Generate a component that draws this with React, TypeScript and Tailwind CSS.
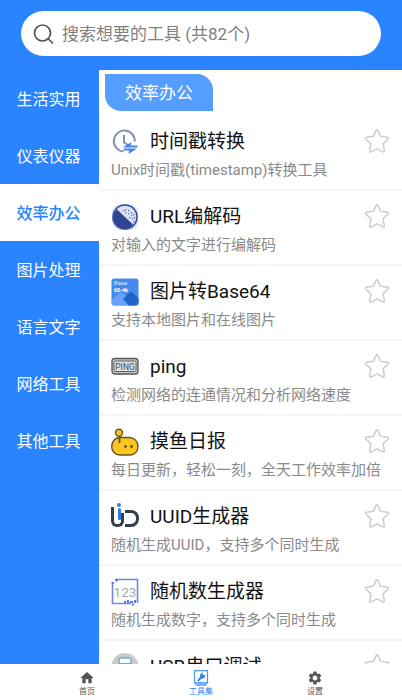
import React, { useState } from 'react';
import { clsx } from 'clsx';
import { MdHome, MdSettings } from 'react-icons/md';

interface Tool {
  icon: React.ReactNode;
  name: string;
  desc?: string;
}

function TimestampIcon() {
  return (
    <svg viewBox="0 0 28 28" className="size-7" fill="none">
      <path d="M12.500 23.500a10.500 10.500 0 1 1 11.300-10" stroke="#8393b4" strokeWidth="2" />
      <path d="M13 7v7.500l4 2.500" stroke="#8393b4" strokeWidth="2" />
      <path d="M11.500 19.500l9-5.500-1 3.500h7.500l-1 2zM26 20.500l-8.500 5.500.700-3.500h-6l1-2z" fill="#4380f5" />
    </svg>
  );
}

function UrlIcon() {
  const dots = [
    [14, 6], [17, 7], [20, 9], [14, 9], [17, 10], [20, 12], [22, 11],
    [18, 14], [21, 15], [23, 14], [22, 18], [12, 7],
  ];
  return (
    <svg viewBox="0 0 28 28" className="size-7" fill="none">
      <rect x="1" y="1" width="26" height="26" rx="9" fill="#d5dbff" />
      <circle cx="14" cy="14" r="12" fill="#dce2f6" stroke="#344894" strokeWidth="1.500" />
      <path d="M6 6.500L22 21.500A11 11 0 1 1 6 6.500z" fill="#304591" />
      {dots.map(([x, y]) => (
        <rect key={`${x}-${y}`} x={x} y={y} width="1.300" height="1.300" fill="#6574a8" />
      ))}
    </svg>
  );
}

function Base64Icon() {
  return (
    <svg viewBox="0 0 28 28" className="size-7" fill="none">
      <rect x="0.500" y="0.500" width="27" height="27" rx="3" fill="#458af0" />
      <path d="M1 22l7-7q2-2 4 0l12 12.500H3.500q-3 0-3-3z" fill="#6aa2fb" />
      <path d="M12 21l6-6q2-2 4 0l5.500 5.500v4q0 3-3 3h-6.500z" fill="#1e63c9" />
      <text x="3" y="7" fontSize="6" fill="#dcecff" fontFamily="Roboto, sans-serif">Base</text>
      <text x="3" y="13.500" fontSize="5" fontWeight="900" fill="#fff" fontFamily="Roboto, sans-serif">65-4k</text>
    </svg>
  );
}

function PingIcon() {
  return (
    <svg viewBox="0 0 28 28" className="size-7" fill="none">
      <path d="M3.500 5.500H24q3 0 3 3V18q0 3-3 3H4q-3 0-3-3V8.500q0-3 2.500-3z" fill="#c8c8c8" stroke="#555" strokeWidth="1.300" />
      <rect x="3" y="8" width="22" height="10.500" rx="1.500" fill="#e4e4e4" stroke="#5d5d5d" />
      <text x="14" y="16.500" fontSize="8.500" textAnchor="middle" fill="#444" fontFamily="Roboto, sans-serif">PING</text>
    </svg>
  );
}

function FishIcon() {
  return (
    <svg viewBox="0 0 28 28" className="size-7" stroke="#625426" strokeWidth="1.400">
      <path d="M9 9.500h9c5.500 0 9 4 9 9s-3.500 8.500-8 8.500H9c-5 0-8.300-4-8.300-8.500S4 9.500 9 9.500z" fill="#fec522" />
      <path d="M8.500 8v7" fill="none" strokeWidth="1.800" />
      <circle cx="8" cy="4.800" r="3.500" fill="#fec522" />
      <circle cx="14.500" cy="18.500" r="1.300" fill="#4b3d13" stroke="none" />
      <circle cx="20.500" cy="18.500" r="1.300" fill="#4b3d13" stroke="none" />
    </svg>
  );
}

function UuidIcon() {
  return (
    <div className="relative flex size-7 items-end pb-1">
      <div className="h-5 w-1.5 rounded-bl-md border-b-3 border-l-3 border-[#333d4f]" />
      <div className="h-3.5 w-[7px] rounded-br-md border-r-3 border-b-3 border-[#333d4f]" />
      <div className="ml-px h-[17px] flex-1 rounded-r-lg border-3 border-l-0 border-[#333d4f]" />
      <div className="absolute top-0 left-1.5 flex flex-col items-center gap-px">
        <div className="size-1 rounded-full bg-[#2e78ee]" />
        <div className="h-3 w-[3px] rounded-sm bg-[#2e78ee]" />
      </div>
    </div>
  );
}

function RandomIcon() {
  return (
    <svg viewBox="0 0 28 28" className="size-7" fill="none">
      <path d="M5 1.500h21.500V25M20 25.500H1.500V4" stroke="#6f85ed" strokeWidth="1.600" />
      <circle cx="5.500" cy="2" r="1.500" fill="#5c78f0" />
      <circle cx="1.800" cy="5" r="1.200" fill="#5c78f0" />
      <text x="14" y="19" fontSize="13.500" textAnchor="middle" fill="#aaa" fontFamily="Roboto, sans-serif">123</text>
      <path d="M13 23h2v2h-2zM16 22h2v3h-2zM19 23h3v2h-3zM23 22h2v3h-2zM21 25.500h2v2h-2z" fill="#5c78f0" />
    </svg>
  );
}

function UsbIcon() {
  return (
    <svg viewBox="0 0 28 28" className="size-7" fill="none">
      <circle cx="14" cy="13.500" r="13.500" fill="#cbcbcb" />
      <rect x="8" y="5" width="12" height="6" rx="1" fill="#f2fbff" stroke="#528ba5" />
      <path d="M8 11h12l2 4H6z" fill="#9fe0f5" stroke="#4a94b2" />
    </svg>
  );
}

function StarIcon({ filled }: { filled: boolean }) {
  return (
    <svg viewBox="0 0 26 26" className="size-[26px]" fill={filled ? '#ffc83d' : 'none'}>
      <path
        d="M16.500 8.200L14 2.700q-1-2-2 0L9.300 8.300 2.600 9.300q-1.900.400-.500 1.900l4.800 4.700-1.200 6.800q-.200 2 1.600 1.200L13 20.800l5.800 3.100q1.700.700 1.500-1.200l-1.200-6.800 4.800-4.700q1.400-1.500-.500-1.900l-5.200-.800"
        stroke="#ccc"
        strokeWidth="1.500"
        strokeLinecap="round"
        strokeLinejoin="round"
      />
    </svg>
  );
}

function ToolboxIcon() {
  return (
    <svg viewBox="0 0 16 16" className="size-4" fill="none">
      <rect x="1.500" y="0.700" width="13" height="12" stroke="#4c93f7" strokeWidth="1.200" />
      <path d="M1 13.300h14L12.500 16h-9z" fill="#77adfa" />
      <path d="M4 10.500l3-3.500q-.500-3.500 2.800-4.500v2.800l2.500-.500q0 4-4 4l-2.500 2.500z" fill="#2882fb" />
    </svg>
  );
}

const categories = ['生活实用', '仪表仪器', '效率办公', '图片处理', '语言文字', '网络工具', '其他工具'];

const tools: Tool[] = [
  { icon: <TimestampIcon />, name: '时间戳转换', desc: 'Unix时间戳(timestamp)转换工具' },
  { icon: <UrlIcon />, name: 'URL编解码', desc: '对输入的文字进行编解码' },
  { icon: <Base64Icon />, name: '图片转Base64', desc: '支持本地图片和在线图片' },
  { icon: <PingIcon />, name: 'ping', desc: '检测网络的连通情况和分析网络速度' },
  { icon: <FishIcon />, name: '摸鱼日报', desc: '每日更新，轻松一刻，全天工作效率加倍' },
  { icon: <UuidIcon />, name: 'UUID生成器', desc: '随机生成UUID，支持多个同时生成' },
  { icon: <RandomIcon />, name: '随机数生成器', desc: '随机生成数字，支持多个同时生成' },
  { icon: <UsbIcon />, name: 'USB串口调试' },
];

const tabs = [
  { icon: <MdHome size={16} />, label: '首页' },
  { icon: <ToolboxIcon />, label: '工具集' },
  { icon: <MdSettings size={16} />, label: '设置' },
];

function ToolRow({ icon, name, desc }: Tool) {
  const [starred, setStarred] = useState(false);
  return (
    <li className="flex h-[75px] items-start border-b-2 border-[#f5f5f5] px-3 pt-3">
      <div className="min-w-0 flex-1">
        <div className="flex h-7 items-center gap-[11px]">
          {icon}
          <h2 className="text-[19px] leading-7 whitespace-nowrap text-[#111]">{name}</h2>
        </div>
        {desc && <p className="mt-0.5 text-[15px] leading-6 whitespace-nowrap text-[#8a8a8a]">{desc}</p>}
      </div>
      <button
        aria-label={`收藏${name}`}
        aria-pressed={starred}
        onClick={() => setStarred(!starred)}
        className="-ml-7"
      >
        <StarIcon filled={starred} />
      </button>
    </li>
  );
}

export default function App() {
  const [category, setCategory] = useState('效率办公');
  const [tab, setTab] = useState('工具集');

  return (
    <div className="flex h-dvh flex-col bg-[#2a84ff] font-['Roboto','Noto_Sans_CJK_SC',sans-serif]">
      <header className="px-[21px] pt-[11px] pb-[14px]">
        <label className="flex h-[45px] items-center gap-[7px] rounded-full bg-white px-3">
          <svg viewBox="0 0 22 22" className="size-[22px]" fill="none" stroke="#555" strokeWidth="1.700">
            <circle cx="9.500" cy="10" r="8" />
            <path d="M15 15.500l4.500 4.500" strokeLinecap="round" />
          </svg>
          <input
            type="search"
            aria-label="搜索工具"
            placeholder="搜索想要的工具 (共82个)"
            className="min-w-0 flex-1 pt-0.5 text-[17px] outline-none placeholder:text-[#808080]"
          />
        </label>
      </header>

      <div className="flex min-h-0 flex-1">
        <nav className="flex w-[99px] shrink-0 flex-col">
          {categories.map((item) => (
            <button
              key={item}
              onClick={() => setCategory(item)}
              className={clsx(
                'h-[57px] pt-[3px] pr-0.5 text-base',
                item === category ? 'bg-white font-medium text-[#2a84ff]' : 'text-white'
              )}
            >
              {item}
            </button>
          ))}
        </nav>

        <main className="min-w-0 flex-1 overflow-y-auto bg-white [scrollbar-width:none]">
          <div className="px-1.5 pt-1">
            <h1 className="flex h-[37px] w-fit items-center rounded-tr-2xl rounded-bl-2xl bg-[#559dff] px-5 pt-0.5 text-[17px] text-white">
              {category}
            </h1>
          </div>
          <ul className="pt-[5px]">
            {tools.map((tool) => (
              <ToolRow key={tool.name} {...tool} />
            ))}
          </ul>
        </main>
      </div>

      <footer className="grid h-9 shrink-0 grid-cols-3 bg-white px-[30px]">
        {tabs.map(({ icon, label }) => (
          <button
            key={label}
            onClick={() => setTab(label)}
            className={clsx(
              'flex flex-col items-center pt-1.5 text-[8px] leading-3',
              tab === label ? 'text-[#2a84ff]' : 'text-[#555]'
            )}
          >
            {icon}
            <span>{label}</span>
          </button>
        ))}
      </footer>
    </div>
  );
}
